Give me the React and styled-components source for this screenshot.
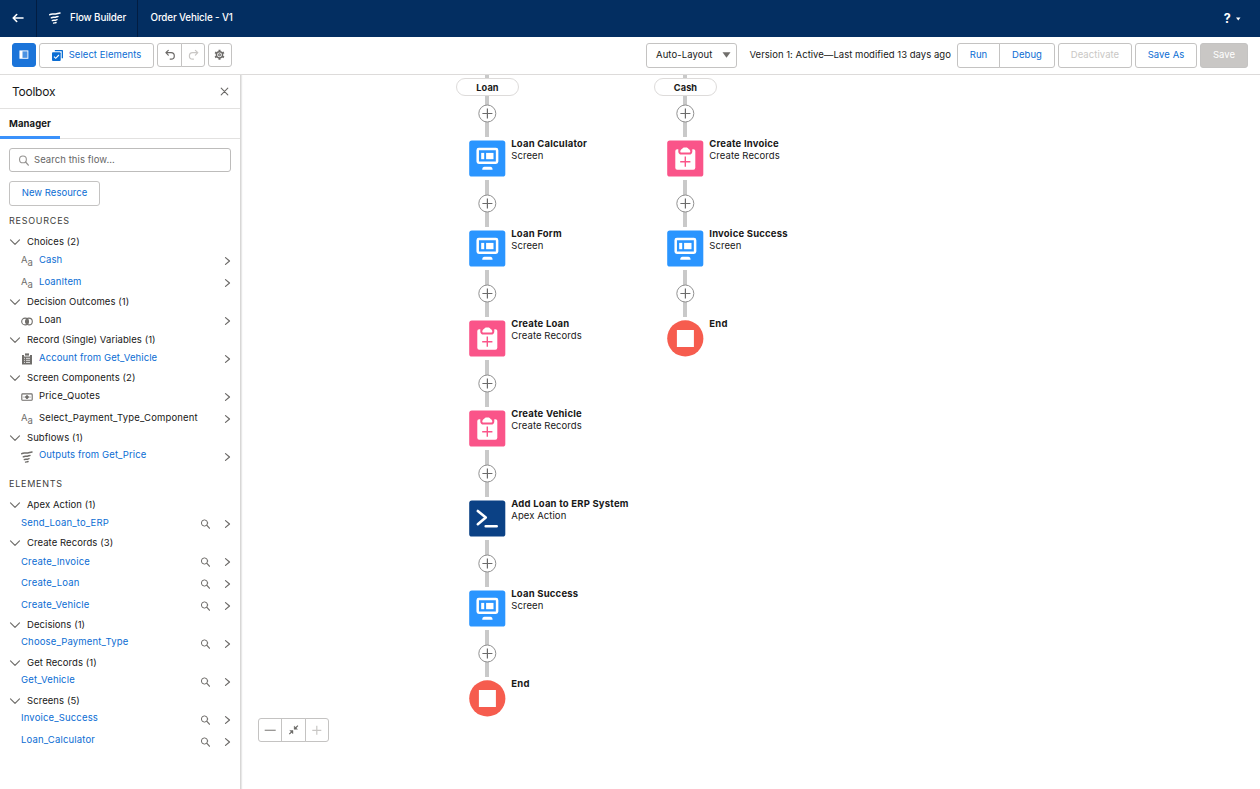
import React from "react";
import styled, { createGlobalStyle } from "styled-components";

const Global = createGlobalStyle`
  *, *::before, *::after { box-sizing: border-box; }
  html, body { margin: 0; padding: 0; background: #fff; }
  body { font: 400 9.5px/12px Inter, "Liberation Sans", sans-serif; letter-spacing: 0.07px; color: #181818; overflow: hidden; }
  svg { display: block; flex: none; }
`;

const Page = styled.div`display: flex; flex-direction: column; width: 1260px; height: 789px; overflow: hidden;`;

const Header = styled.header`
  display: flex; height: 37px; flex: none; background: #032e61; color: #fff;
  font-size: 9.8px; font-weight: 500; letter-spacing: -0.13px;
`;
const HeaderCell = styled.div`
  display: flex; align-items: center; width: ${(p) => p.$w}px; padding: 0 0 2px ${(p) => p.$pl}px; gap: 9px;
  border-right: ${(p) => (p.$last ? "0" : "1px solid #021d42")};
`;
const Help = styled.div`
  display: flex; align-items: center; gap: 5px; margin-left: auto; padding-right: 19.5px;
  font-size: 12.5px; font-weight: 700;
`;

const Toolbar = styled.div`
  display: flex; align-items: flex-start; height: 38px; flex: none; padding: 6px 12px 0;
  border-bottom: 1px solid #dddbda;
`;
const Button = styled.button`
  display: flex; align-items: center; justify-content: center; gap: ${(p) => p.$gap || 6}px;
  width: ${(p) => p.$w}px; height: ${(p) => p.$h || 25}px; margin: 0 0 0 ${(p) => p.$ml || 0}px; padding: 0 0 1px;
  font: inherit; letter-spacing: ${(p) => p.$ls || "0.06px"}; white-space: nowrap;
  border: 1px solid ${(p) => (p.$kind === "brand" ? "#1b74d9" : "#c4c3c2")};
  border-radius: ${(p) => p.$r || "3px"};
  background: ${(p) => (p.$kind === "brand" ? "#1b74d9" : p.$kind === "off" ? "#c9c7c5" : "#fff")};
  color: ${(p) => (p.$kind === "off" ? "#fff" : p.$kind === "muted" ? "#c9c7c5" : p.$kind === "dark" ? "#181818" : "#0b6dd3")};
`;
const Select = styled(Button)`justify-content: space-between; padding: 0 5.5px 1px 9px;`;
const Status = styled.div`margin-left: auto; display: flex;`;
const Version = styled.span`width: 208px; padding-left: 12.5px; line-height: 24px; white-space: nowrap; letter-spacing: 0.03px;`;

const Body = styled.div`display: flex; flex: 1; min-height: 0;`;
const Sidebar = styled.aside`width: 241px; flex: none; border-right: 1px solid #d8d7d6; box-shadow: 1px 0 1px #e8e8e8;`;
const PanelTitle = styled.div`
  display: flex; align-items: center; justify-content: space-between; height: 34px; padding: 0 11px 0 12px;
  border-bottom: 1px solid #e2e1e0; font-size: 12px; letter-spacing: -0.25px;
`;
const Tabs = styled.div`height: 30px; border-bottom: 1px solid #e2e1e0; display: flex;`;
const Tab = styled.div`
  width: 60px; height: 30px; padding: 9px 0 0 9px; border-bottom: 3px solid #3b92fb; font-weight: 700; letter-spacing: 0.1px;
`;
const Search = styled.div`
  display: flex; align-items: center; gap: 5px; width: 222px; height: 24px; margin: 9px 0 9px 9px; padding-left: 8px;
  border: 1px solid #bdbcbb; border-radius: 3px; color: #666;
`;
const SectionTitle = styled.div`
  height: 12px; margin: ${(p) => p.$mt}px 0 7px 9px; color: #3e3e3c; font-size: 9px; letter-spacing: 0.75px; line-height: 12px;
`;
const Group = styled.div`
  display: flex; align-items: center; height: 16px; padding-left: 9px; gap: 6px;
`;
const Row = styled.div`
  display: flex; align-items: center; height: 22px; padding: 0 8px 0 21px;
`;
const RowIcon = styled.span`width: 18px;`;
const RowText = styled.span`
  flex: 1; margin-top: ${(p) => p.$shift || 0}px; color: ${(p) => (p.$plain ? "#181818" : "#0b6dd3")};
  line-height: 12px; white-space: nowrap; letter-spacing: ${(p) => (p.$wide ? "0.16px" : "0.1px")};
`;
const RowTools = styled.span`display: flex; align-items: center; gap: 12px; margin-top: -1px;`;

const Canvas = styled.main`position: relative; flex: 1; overflow: hidden;`;
const Track = styled.div`position: absolute; top: 0; left: ${(p) => p.$x}px; width: 220px;`;
const Line = styled.div`width: 4px; height: ${(p) => p.$h}px; margin-left: 17px; background: #c9c9c9;`;
const Pill = styled.div`
  width: 63px; height: 18px; margin-left: -12px; border: 1px solid #dddbda; border-radius: 9px; background: #fff;
  font-weight: 700; line-height: 18px; text-align: center; font-size: 9.2px; letter-spacing: 0.1px;
`;
const PlusWrap = styled.div`margin-left: 10px; height: 19px;`;
const NodeRow = styled.div`display: flex; height: 37px; gap: 5.3px; margin: 3px 0;`;
const Label = styled.div`line-height: 12px; margin-top: -2px; white-space: nowrap;`;
const Name = styled.div`font-weight: 700; letter-spacing: 0.2px;`;
const Zoom = styled.div`position: absolute; left: 17px; top: 643px; display: flex;`;

const Chevron = () => (
  <svg width="12" height="8" viewBox="0 0 12 8" fill="none" stroke="#706e6b" strokeWidth="1.2" strokeLinecap="round" strokeLinejoin="round"><path d="M1.5 1.8 6 6.3l4.5-4.5" /></svg>
);
const Arrow = () => (
  <svg width="10" height="10" viewBox="0 0 10 10" fill="none" stroke="#6b6967" strokeWidth="1.2" strokeLinecap="round" strokeLinejoin="round"><path d="M3.5 1.6 7.500 5 3.500 8.400" /></svg>
);
const Glass = ({ c = "#706e6b", s = 10 }) => (
  <svg width={s} height={s} viewBox="0 0 10 10" fill="none" stroke={c} strokeWidth="1" strokeLinecap="round"><circle cx="4.500" cy="4" r="3.1" /><path d="m6.900 6.4 2.500 2.8" strokeWidth="1.2" /></svg>
);
const FlowIcon = ({ c }) => (
  <svg width="12" height="12" viewBox="0 0 12 12" fill="none" stroke={c} strokeLinecap="round">
    <path d="M.8 2.700C2.900 1.100 4.700 2.500 6.800 2S9.600 1.200 11 1" strokeWidth="1.5" />
    <path d="M2.300 5.800c1.700-1.200 2.900-.2 4.200-.6 1.100-.3 1.600-.7 2.500-.8" strokeWidth="1.5" />
    <path d="M3.300 8.600c1.200-.8 2-.1 3.100-.4.800-.2 1.200-.5 1.700-.6" strokeWidth="1.4" />
    <path d="M4.600 11.100c.9-.4 1.500-.1 2.500-.6" strokeWidth="1.400" />
  </svg>
);
const TypeText = styled.span`
  display: flex; height: 12px; color: #706e6b; font-size: 9.5px; letter-spacing: 0; line-height: 10px;
  & > span:last-child { padding-top: 3px; }
`;
const icons = {
  text: <TypeText><span>A</span><span>a</span></TypeText>,
  outcome: (
    <svg width="12" height="12" viewBox="0 0 12 12" fill="none" stroke="#706e6b" strokeWidth="1.1"><circle cx="4.100" cy="6.500" r="3.400" /><circle cx="7.900" cy="6.500" r="3.400" /><path d="M6 4Q7.600 6.500 6 9 4.400 6.500 6 4Z" fill="#706e6b" /></svg>
  ),
  record: (
    <svg width="12" height="12" viewBox="0 0 12 12"><path d="M1 2h2v1.500h6V2h2v9.600H1z" fill="#706e6b" /><path d="M4 .4h4v2.200H4z" fill="#706e6b" /><path d="M3 5.300h1M5 5.300h4M3 7.300h1M5 7.300h4M3 9.400h1M5 9.400h4" stroke="#fff" strokeWidth=".8" /></svg>
  ),
  money: (
    <svg width="12" height="12" viewBox="0 0 12 12" fill="none" stroke="#706e6b"><rect x=".8" y="2.900" width="10.400" height="6.400" rx=".8" strokeWidth="1.100" /><circle cx="6" cy="6.100" r="1.400" fill="#706e6b" /><path d="M2.500 6.100h1M8.500 6.100h1" /></svg>
  ),
  flow: <FlowIcon c="#706e6b" />,
};

const Plus = () => (
  <svg width="19" height="19" viewBox="0 0 19 19" fill="none"><path d="M9 0v19" stroke="#c9c9c9" strokeWidth="4" /><circle cx="9.300" cy="9.500" r="8.500" fill="#fff" stroke="#919191" strokeWidth="1" /><path d="M4.400 9.500h10M9.400 4.500v10" stroke="#6b6b6b" strokeWidth="1.200" /></svg>
);

const fills = { Screen: "#2a95ff", "Create Records": "#fa5489", "Apex Action": "#0b4185" };
const NodeIcon = ({ type }) => (
  <svg width="38" height="37" viewBox="0 0 38 37">
    {type ? <rect x="1.200" y=".4" width="36.100" height="36.200" rx="2.600" fill={fills[type]} /> : <circle cx="19.300" cy="18.400" r="18.100" fill="#f65c4e" />}
    {!type && <rect x="10.900" y="10" width="17" height="17" fill="#fff" />}
    {type === "Screen" && (
      <g fill="none" stroke="#fff">
        <rect x="9.700" y="9.100" width="19.400" height="13.600" rx="1.200" strokeWidth="2.500" />
        <rect x="13.200" y="12.900" width="3" height="6.300" fill="#fff" stroke="none" />
        <rect x="18.100" y="12.900" width="7.400" height="6.300" fill="#fff" stroke="none" />
        <path d="M14.200 29.700h10.400c0-1.800-.9-2.900-2.300-2.900h-5.800c-1.400 0-2.300 1.100-2.300 2.900Z" fill="#fff" stroke="none" />
      </g>
    )}
    {type === "Create Records" && (
      <g>
        <rect x="9.300" y="9.200" width="20" height="20.500" rx="1.900" fill="#fff" />
        <path d="M12.300 8h14v3.500c0 2-1.300 3.100-3 3.100h-8c-1.700 0-3-1.100-3-3.100Z" fill="#fa5489" />
        <path d="M14.300 11.500c0-1.400.8-2.300 1.800-2.600.5-1 1.200-1.500 2.300-1.500h1.800c1.100 0 1.800.5 2.300 1.500 1 .3 1.800 1.200 1.800 2.600 0 .7-.4 1.100-1.100 1.100h-7.800c-.7 0-1.100-.4-1.100-1.100Z" fill="#fff" />
        <path d="M14.200 21.700h10.200M19.300 16.600v10.200" stroke="#fa5489" strokeWidth="1.400" />
      </g>
    )}
    {type === "Apex Action" && <path d="m9.800 11 8 6.400-8 6.800M17.700 26.300h11" fill="none" stroke="#fff" strokeWidth="2.600" strokeLinecap="round" strokeLinejoin="round" />}
  </svg>
);

const resources = [
  ["Choices (2)", [["Cash", "text", 0, -3], ["LoanItem", "text", 0, -3]]],
  ["Decision Outcomes (1)", [["Loan", "outcome", 1, -3]]],
  ["Record (Single) Variables (1)", [["Account from Get_Vehicle", "record", 0, -2]]],
  ["Screen Components (2)", [["Price_Quotes", "money", 1, -3], ["Select_Payment_Type_Component", "text", 1, -3]]],
  ["Subflows (1)", [["Outputs from Get_Price", "flow", 0, -5]]],
];
const elements = [
  ["Apex Action (1)", [["Send_Loan_to_ERP", null, 0, -2]]],
  ["Create Records (3)", [["Create_Invoice"], ["Create_Loan", null, 0, -3], ["Create_Vehicle", null, 0, -3]]],
  ["Decisions (1)", [["Choose_Payment_Type", null, 0, -4]]],
  ["Get Records (1)", [["Get_Vehicle", null, 0, -4]]],
  ["Screens (5)", [["Invoice_Success", null, 0, -4], ["Loan_Calculator", null, 0, -4]]],
];
const Tree = ({ data, search }) => data.map(([title, rows]) => (
  <div key={title}>
    <Group><Chevron />{title}</Group>
    {rows.map(([name, icon, plain, shift]) => (
      <Row key={name}>
        {icon && <RowIcon>{icons[icon]}</RowIcon>}
        <RowText $plain={plain} $shift={shift} $wide={name.includes("_") && !name.includes(" ")}>{name}</RowText>
        <RowTools>{search && <Glass />}<Arrow /></RowTools>
      </Row>
    ))}
  </div>
));

const Path = ({ x, label, nodes }) => (
  <Track $x={x}>
    <Line $h={3} />
    <Pill>{label}</Pill>
    <Line $h={8} />
    <PlusWrap><Plus /></PlusWrap>
    <Line $h={14} />
    {nodes.map(([name, type], i) => (
      <React.Fragment key={name}>
        {i > 0 && <><Line $h={14} /><PlusWrap><Plus /></PlusWrap><Line $h={14} /></>}
        <NodeRow>
          <NodeIcon type={type} />
          <Label><Name>{name}</Name>{type}</Label>
        </NodeRow>
      </React.Fragment>
    ))}
  </Track>
);

export default function App() {
  return (
    <Page>
      <Global />
      <Header>
        <HeaderCell $w={37} $pl={12}>
          <svg width="12" height="10" viewBox="0 0 12 10" fill="none" stroke="#fff" strokeWidth="1.600" strokeLinecap="round" strokeLinejoin="round"><path d="M11 5H1.300M4.700 1.500 1.200 5l3.500 3.500" /></svg>
        </HeaderCell>
        <HeaderCell $w={101} $pl={12}><FlowIcon c="#fff" />Flow Builder</HeaderCell>
        <HeaderCell $w={200} $pl={12.500} $last>Order Vehicle - V1</HeaderCell>
        <Help>?<svg width="5" height="4" viewBox="0 0 5 4"><path d="M0 .5h4.500L2.250 3.500z" fill="#fff" /></svg></Help>
      </Header>
      <Toolbar>
        <Button $kind="brand" $w={24} $h={24}>
          <svg width="10" height="9" viewBox="0 0 10 9"><rect x=".900" y=".900" width="8" height="7.400" fill="#4c93e2" stroke="#fff" strokeWidth=".9" /><path d="M1 1h2.500v7H1z" fill="#fff" /></svg>
        </Button>
        <Button $w={115} $ml={3}>
          <svg width="11" height="11" viewBox="0 0 11 11"><path d="M2.800 0h7.200c.6 0 1 .4 1 1v7.200h-1.300V1.300H2.800z" fill="#0b6dd3" /><rect y="2.200" width="8.700" height="8.700" rx="1" fill="#0b6dd3" /><path d="m2 6.700 1.700 1.600L6.900 5" fill="none" stroke="#fff" strokeWidth="1.100" /></svg>
          Select Elements
        </Button>
        <Button $w={25} $h={24} $ml={3} $r="3px 0 0 3px">
          <svg width="11" height="11" viewBox="0 0 11 11" fill="none" stroke="#6b6967" strokeWidth="1.200" strokeLinecap="round" strokeLinejoin="round"><path d="M4.300 1.300 1.900 3.700l2.400 2.400M2.100 3.700h5a3.200 3.200 0 0 1 0 6.400H6.200" /></svg>
        </Button>
        <Button $w={24} $h={24} $ml={-1} $r="0 3px 3px 0">
          <svg width="11" height="11" viewBox="0 0 11 11" fill="none" stroke="#c9c7c5" strokeWidth="1.200" strokeLinecap="round" strokeLinejoin="round"><path d="m7.400 1.300 2.400 2.400-2.400 2.400M9.600 3.700h-5a3.200 3.200 0 0 0 0 6.400h.9" /></svg>
        </Button>
        <Button $w={24} $h={24} $ml={3}>
          <svg width="12" height="11" viewBox="0 0 12 11" fill="none" stroke="#6b6967"><circle cx="5.500" cy="5.800" r="3.100" strokeWidth="1.400" /><circle cx="5.500" cy="5.800" r="1.200" fill="#a3a19f" strokeWidth=".8" /><path d="M5.500 .8v1.700M5.500 9.100v1.700M1.100 3.300l1.400.8M8.500 7.500l1.400.8M1.100 8.300l1.400-.8M8.500 4.100l1.400-.8" strokeWidth="2" /></svg>
        </Button>
        <Status>
          <Select $kind="dark" $w={91} $ls="0.1px">Auto-Layout<svg width="9" height="6" viewBox="0 0 9 6"><path d="M.5.300h8L4.500 5.700z" fill="#706e6b" /></svg></Select>
          <Version>Version 1: Active—Last modified 13 days ago</Version>
        </Status>
        <Button $w={43} $ml={12} $r="3px 0 0 3px">Run</Button>
        <Button $w={56} $ml={-1} $r="0 3px 3px 0">Debug</Button>
        <Button $w={74} $ml={3} $kind="muted">Deactivate</Button>
        <Button $w={62} $ml={3}>Save As</Button>
        <Button $w={48} $ml={3} $kind="off">Save</Button>
      </Toolbar>
      <Body>
        <Sidebar>
          <PanelTitle>Toolbox<svg width="9" height="9" viewBox="0 0 9 9" stroke="#6b6967" strokeWidth="1.100" strokeLinecap="round"><path d="m1.200 1.200 6.600 6.600M7.800 1.200 1.200 7.800" /></svg></PanelTitle>
          <Tabs><Tab>Manager</Tab></Tabs>
          <Search><Glass c="#969492" s={11} />Search this flow...</Search>
          <Button $w={91} $ml={9} $ls="0.02px">New Resource</Button>
          <SectionTitle $mt={9}>RESOURCES</SectionTitle>
          <Tree data={resources} />
          <SectionTitle $mt={10}>ELEMENTS</SectionTitle>
          <Tree data={elements} search />
        </Sidebar>
        <Canvas>
          <Path x={227} label="Loan" nodes={[["Loan Calculator", "Screen"], ["Loan Form", "Screen"], ["Create Loan", "Create Records"], ["Create Vehicle", "Create Records"], ["Add Loan to ERP System", "Apex Action"], ["Loan Success", "Screen"], ["End", ""]]} />
          <Path x={425} label="Cash" nodes={[["Create Invoice", "Create Records"], ["Invoice Success", "Screen"], ["End", ""]]} />
          <Zoom>
            <Button $w={24} $h={24} $r="3px 0 0 3px"><svg width="12" height="10" viewBox="0 0 12 10"><path d="M.700 5.300h11" stroke="#969492" strokeWidth="1.300" /></svg></Button>
            <Button $w={25} $h={24} $ml={-1} $r="0"><svg width="11" height="11" viewBox="0 0 11 11" fill="#6b6967" stroke="#6b6967"><path d="m6.500 5 3.400-3.400M4.700 6.800 1.300 10.200" strokeWidth="1.200" /><path d="M6.200 2v3.300h3.300zM5 9.800V6.500H1.700z" strokeWidth=".4" /></svg></Button>
            <Button $w={24} $h={24} $ml={-1} $r="0 3px 3px 0"><svg width="10" height="10" viewBox="0 0 10 10"><path d="M.300 5.300h9M4.800 .800v9" stroke="#c9c7c5" strokeWidth="1.200" /></svg></Button>
          </Zoom>
        </Canvas>
      </Body>
    </Page>
  );
}
